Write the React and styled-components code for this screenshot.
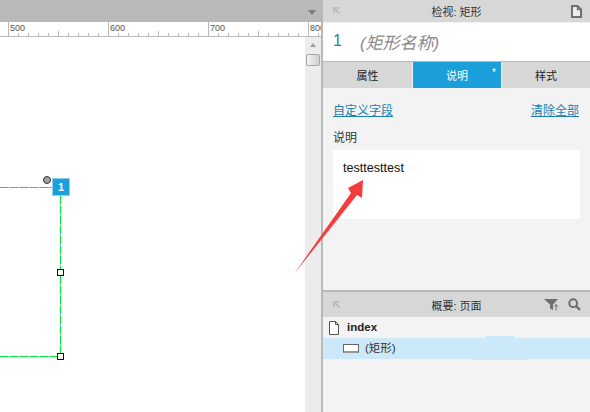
import React from "react";
import styled, { createGlobalStyle } from "styled-components";

const Global = createGlobalStyle`
  html, body { margin: 0; padding: 0; background: #fff; }
  #root { width: 590px; height: 412px; overflow: hidden; }
`;
const FONT = `"Liberation Sans", Arial, "Noto Sans CJK SC", sans-serif`;

const Page = styled.div`
  position: relative;
  width: 590px;
  height: 412px;
  display: flex;
  overflow: hidden;
  font-family: ${FONT};
  font-size: 12px;
  color: #222;
`;
const Left = styled.div`
  width: 321px;
  display: flex;
  flex-direction: column;
  flex: none;
`;
const TopBar = styled.div`
  height: 22px;
  background: #b9b9b9;
  display: flex;
  align-items: center;
  justify-content: flex-end;
  padding-right: 5px;
  flex: none;
  box-sizing: border-box;
`;
const Caret = styled.div`
  width: 0;
  height: 0;
  margin-top: 2px;
  border-left: 4.5px solid transparent;
  border-right: 4.5px solid transparent;
  border-top: 5px solid #7d7d7d;
`;
const Ruler = styled.div`
  height: 15px;
  flex: none;
  box-sizing: border-box;
  display: flex;
  overflow: hidden;
  background: #fff;
  border-bottom: 1px solid #b9b9b9;
  padding-left: 8px;
`;
const RulerSeg = styled.div`
  position: relative;
  width: 100px;
  flex: none;
  box-sizing: border-box;
  border-left: 1px solid #b9b9b9;
`;
const RulerLabel = styled.span`
  position: absolute;
  left: 1px;
  top: 1px;
  font-size: 9px;
  line-height: 10px;
  color: #555;
`;
const RulerTicks = styled.svg`
  position: absolute;
  left: -1px;
  bottom: 0;
`;
const Middle = styled.div`
  flex: 1;
  display: flex;
  min-height: 0;
`;
const Canvas = styled.div`
  position: relative;
  width: 305px;
  background: #fff;
  overflow: hidden;
`;
const Scrollbar = styled.div`
  width: 16px;
  background: #ececec;
  box-sizing: border-box;
  padding-top: 6px;
  display: flex;
  flex-direction: column;
  align-items: center;
  gap: 7px;
`;
const ScrollUp = styled.div`
  width: 0;
  height: 0;
  border-left: 3.5px solid transparent;
  border-right: 3.5px solid transparent;
  border-bottom: 4px solid #9a9a9a;
`;
const Thumb = styled.div`
  width: 14px;
  height: 12px;
  box-sizing: border-box;
  border: 1px solid #a8a8a8;
  border-radius: 2px;
  background: linear-gradient(90deg, #f4f4f4, #d0d0d0);
`;
const GuideH = styled.div`
  position: absolute;
  left: 0;
  width: ${p => p.$w}px;
  top: ${p => p.$y}px;
  height: 1px;
  background: repeating-linear-gradient(90deg, #00e83a 0 8px, #8fd8a0 8px 10px);
`;
const GuideV = styled.div`
  position: absolute;
  left: 60px;
  top: 159px;
  width: 1px;
  height: 161px;
  background: repeating-linear-gradient(180deg, #00e83a 0 8px, #8fd8a0 8px 10px);
`;
const Handle = styled.div`
  position: absolute;
  width: 7px;
  height: 7px;
  left: 57px;
  top: ${p => p.$y}px;
  box-sizing: border-box;
  background: #fff;
  border: 1px solid #111;
`;
const RoundHandle = styled.div`
  position: absolute;
  left: 43px;
  top: 139px;
  width: 8px;
  height: 8px;
  border-radius: 50%;
  box-sizing: border-box;
  background: #a2a2a2;
  border: 1px solid #333;
`;
const Badge = styled.div`
  position: absolute;
  left: 52px;
  top: 141px;
  width: 18px;
  height: 18px;
  box-sizing: border-box;
  background: #1a9fdb;
  border: 1px solid #8fd0ee;
  color: #fff;
  font-size: 11px;
  font-weight: bold;
  text-align: center;
  line-height: 16px;
`;
const Divider = styled.div`
  width: 2px;
  flex: none;
  background: #b9b9b9;
`;
const Right = styled.div`
  flex: 1;
  min-width: 0;
  display: flex;
  flex-direction: column;
  background: #f3f3f3;
`;
const PanelHeader = styled.div`
  position: relative;
  height: ${p => p.$h}px;
  flex: none;
  background: #d7d7d7;
  display: flex;
  align-items: center;
  justify-content: center;
  font-size: 11px;
  color: #333;
`;
const PinIcon = styled.svg`
  position: absolute;
  left: 9px;
  top: ${p => p.$top}px;
`;
const HeaderIcons = styled.div`
  position: absolute;
  right: ${p => p.$right}px;
  top: 0;
  bottom: 0;
  display: flex;
  align-items: center;
  gap: 9px;
`;
const NameRow = styled.div`
  height: 39px;
  flex: none;
  background: #fff;
  border-top: 1px solid #f3f3f3;
  box-sizing: border-box;
  display: flex;
  align-items: center;
  padding: 0 0 2px 10px;
  gap: 18px;
  font-size: 17px;
`;
const NameId = styled.span`
  font-size: 16px;
  color: #2a7fa8;
`;
const NamePlaceholder = styled.span`
  color: #8a8a8a;
  font-style: italic;
`;
const Tabs = styled.div`
  height: 27px;
  flex: none;
  display: grid;
  grid-template-columns: 89px 88px 1fr;
  gap: 1px;
  border-top: 1px solid #b9b9b9;
  box-sizing: border-box;
`;
const Tab = styled.div`
  position: relative;
  display: flex;
  align-items: center;
  justify-content: center;
  padding-bottom: 1px;
  background: ${p => (p.$active ? "#1a9fdb" : "#d7d7d7")};
  color: ${p => (p.$active ? "#fff" : "#222")};
  font-size: 11px;
`;
const Star = styled.span`
  position: absolute;
  right: 5px;
  top: 5px;
  font-size: 10px;
  line-height: 12px;
  color: #fff;
`;
const Notes = styled.div`
  height: 202px;
  flex: none;
  box-sizing: border-box;
  padding: 13px 10px 0;
  display: flex;
  flex-direction: column;
`;
const LinkRow = styled.div`
  display: flex;
  justify-content: space-between;
  padding-right: 1px;
  height: 17px;
  align-items: center;
`;
const Link = styled.a`
  color: #1a7fb0;
  text-decoration: underline;
  font-size: 12px;
`;
const NotesLabel = styled.div`
  margin-top: 12px;
  font-size: 12px;
  line-height: 17px;
  color: #333;
`;
const NotesBox = styled.div`
  margin-top: 3px;
  width: 247px;
  height: 69px;
  background: #fff;
  box-sizing: border-box;
  padding: 10px 10px;
  font-size: 12.6px;
  line-height: 17px;
  color: #111;
`;
const Split = styled.div`
  height: 2px;
  flex: none;
  background: #b9b9b9;
`;
const TreeRow = styled.div`
  position: relative;
  height: ${p => p.$h}px;
  flex: none;
  display: flex;
  align-items: center;
  box-sizing: border-box;
  padding-left: ${p => p.$pad}px;
  gap: ${p => p.$gap}px;
  background: ${p => (p.$selected ? "#cbe9f8" : "transparent")};
`;
const PageName = styled.span`
  font-size: 11.5px;
  font-weight: bold;
  color: #222;
  margin-top: -1px;
`;
const ShapeName = styled.span`
  font-size: 11.5px;
  color: #333;
  margin-top: -3px;
`;
const RectIcon = styled.div`
  width: 16px;
  height: 9px;
  box-sizing: border-box;
  background: #fff;
  border: 1px solid #666;
  border-bottom-width: 2px;
  border-bottom-color: #999;
`;
const Blob = styled.div`
  position: absolute;
  left: ${p => p.$x}px;
  top: ${p => p.$y}px;
  width: ${p => p.$w}px;
  height: ${p => p.$h}px;
  background: ${p => p.$c};
  border-radius: 2px;
`;
const ArrowLayer = styled.svg`
  position: absolute;
  left: 290px;
  top: 175px;
  pointer-events: none;
`;

const Pin = ({ top }) => (
  <PinIcon $top={top} width="9" height="9" viewBox="0 0 9 9">
    <path d="M1 1h6v1.8H4.2L8 6.6 6.6 8 2.8 4.2V7H1z" fill="#bcbcbc" />
  </PinIcon>
);

const labels = [500, 600, 700, 800];

export default function App() {
  return (
    <Page>
      <Global />
      <Left>
        <TopBar><Caret /></TopBar>
        <Ruler>
          {labels.map(l => (
            <RulerSeg key={l}>
              <RulerLabel>{l}</RulerLabel>
              <RulerTicks width="100" height="5" viewBox="0 0 100 5">
                {Array.from({ length: 9 }, (_, i) => (
                  <rect key={i} x={(i + 1) * 10} y={i === 4 ? 0 : 2} width="1" height={i === 4 ? 5 : 3} fill="#b9b9b9" />
                ))}
              </RulerTicks>
            </RulerSeg>
          ))}
        </Ruler>
        <Middle>
          <Canvas>
            <GuideH $y={150} $w={53} />
            <GuideH $y={319} $w={60} />
            <GuideV />
            <Handle $y={232} />
            <Handle $y={316} />
            <RoundHandle />
            <Badge>1</Badge>
          </Canvas>
          <Scrollbar>
            <ScrollUp />
            <Thumb />
          </Scrollbar>
        </Middle>
      </Left>
      <Divider />
      <Right>
        <PanelHeader $h={22}>
          <Pin top={6} />
          检视: 矩形
          <HeaderIcons $right={8}>
            <svg width="11" height="13" viewBox="0 0 11 13">
              <path d="M1 1h5.5L10 4.5V12H1z" fill="#ececec" stroke="#6f6f6f" strokeWidth="2" />
              <path d="M6.5 1v3.5H10" fill="none" stroke="#6f6f6f" strokeWidth="1.5" />
            </svg>
          </HeaderIcons>
        </PanelHeader>
        <NameRow>
          <NameId>1</NameId>
          <NamePlaceholder>(矩形名称)</NamePlaceholder>
        </NameRow>
        <Tabs>
          <Tab>属性</Tab>
          <Tab $active>说明<Star>*</Star></Tab>
          <Tab>样式</Tab>
        </Tabs>
        <Notes>
          <LinkRow>
            <Link>自定义字段</Link>
            <Link>清除全部</Link>
          </LinkRow>
          <NotesLabel>说明</NotesLabel>
          <NotesBox>testtesttest</NotesBox>
        </Notes>
        <Split />
        <PanelHeader $h={25}>
          <Pin top={8} />
          概要: 页面
          <HeaderIcons $right={9}>
            <svg width="15" height="12" viewBox="0 0 15 12">
              <path d="M0 0h14L9 5.5V11L6 9.5V5.5z" fill="#6f6f6f" />
              <path d="M12 5.5v6M10 7.5l2-2 2 2" stroke="#6f6f6f" strokeWidth="1" fill="none" />
            </svg>
            <svg width="13" height="13" viewBox="0 0 13 13">
              <circle cx="5.2" cy="5.2" r="3.9" fill="none" stroke="#6f6f6f" strokeWidth="2" />
              <path d="M8 8l4 4" stroke="#6f6f6f" strokeWidth="2.4" />
            </svg>
          </HeaderIcons>
        </PanelHeader>
        <TreeRow $h={21} $pad={6} $gap={8}>
          <svg width="10" height="14" viewBox="0 0 10 14">
            <path d="M.5.5h6l3 3v10H.5z" fill="#fff" stroke="#555" />
            <path d="M6.5.5v3h3" fill="none" stroke="#555" />
          </svg>
          <PageName>index</PageName>
        </TreeRow>
        <TreeRow $h={21} $pad={20} $gap={6} $selected>
          <Blob $x={162} $y={-2} $w={30} $h={3} $c="#cbe9f8" />
          <Blob $x={150} $y={20} $w={54} $h={2} $c="#cbe9f8" />
          <RectIcon />
          <ShapeName>(矩形)</ShapeName>
        </TreeRow>
      </Right>
      <ArrowLayer width="90" height="105" viewBox="0 0 90 105">
        <path d="M4 99 L61 18 L58 13 L73 5 L72 23 L67 20 Z" fill="#f53c3c" />
      </ArrowLayer>
    </Page>
  );
}
